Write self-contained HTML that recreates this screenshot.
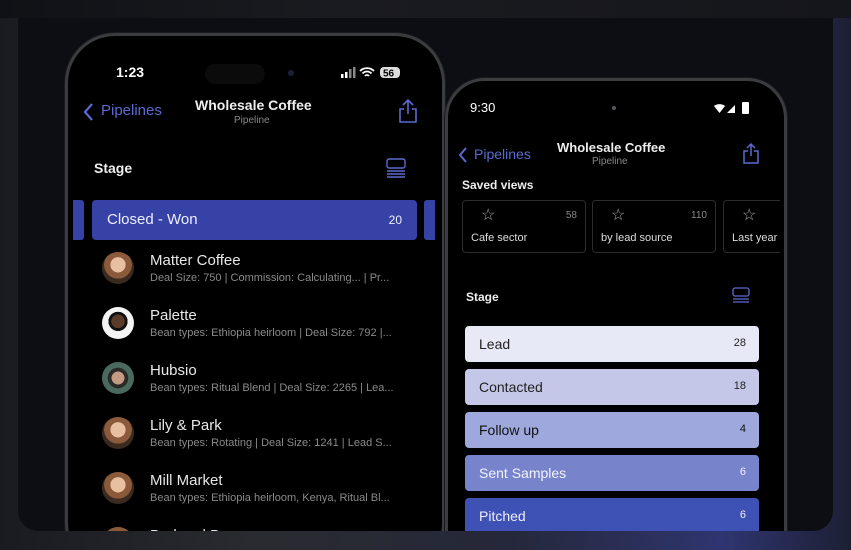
<!DOCTYPE html>
<html><head><style>
*{box-sizing:border-box;margin:0;padding:0}
body{width:851px;height:550px;overflow:hidden;background:linear-gradient(90deg,#1a1b20 0%,#2a2b30 30%,#25283a 60%,#2f3570 85%,#1c1f33 100%);font-family:"Liberation Sans",sans-serif;position:relative}
.top{position:absolute;left:0;top:0;width:851px;height:18px;background:linear-gradient(90deg,#101116,#1a1b20 40%,#15161b)}
.panel{position:absolute;left:18px;top:18px;width:815px;height:513px;border-radius:0 0 20px 20px;background:#0c0e13;overflow:hidden}
.ph{position:absolute;background:#000;border:3px solid #3b3c40;box-shadow:0 0 0 1px #1a1a1c;overflow:hidden}
.t{position:absolute;white-space:nowrap}
.blue{color:#5b6ad0}
.row{position:absolute;left:0;width:370px}
.av{position:absolute;left:34px;width:32px;height:32px;border-radius:50%;background:radial-gradient(circle at 50% 40%,#e8c0a0 0 30%,#8a5a3a 31% 55%,#3a2a20 56%)}
.nm{position:absolute;left:82px;font-size:15px;color:#e8e8e8}
.sub{position:absolute;left:82px;top:20px;font-size:11px;color:#8a8a8a}
.st{position:absolute;left:17px;width:294px;height:36px;border-radius:4px;font-size:14px}
.st span{position:absolute;left:14px;top:10px}
.st b{position:absolute;right:13px;top:11px;font-weight:normal;font-size:11px}
.card{position:absolute;top:0;width:124px;height:53px;border:1px solid #2c2c2e;border-radius:4px}
</style></head><body>
<div class="top"></div>
<div class="panel">
 <!-- phone 1 -->
 <div class="ph" style="left:47px;top:15px;width:380px;height:540px;border-radius:50px">
  <div class="t" style="left:48px;top:28px;color:#fff;font-size:14px;font-weight:bold">1:23</div>
  <div style="position:absolute;left:137px;top:28px;width:60px;height:20px;border-radius:10px;background:#0b0b0c"></div>
  <div style="position:absolute;left:220px;top:34px;width:6px;height:6px;border-radius:50%;background:#1b1f3a"></div>
  <svg style="position:absolute;left:272px;top:30px" width="70" height="14"><rect x="1" y="8" width="2.5" height="4" fill="#fff"/><rect x="5" y="6" width="2.5" height="6" fill="#fff"/><rect x="9" y="3" width="2.5" height="9" fill="#888"/><rect x="13" y="1" width="2.5" height="11" fill="#888"/><path d="M20 5a10 10 0 0 1 14 0M22.5 7.5a6 6 0 0 1 9 0M25 10a2.5 2.5 0 0 1 4 0" stroke="#fff" stroke-width="1.8" fill="none"/><rect x="40" y="1" width="20" height="11" rx="4" fill="#ddd"/><text x="43" y="10.5" font-size="10" font-weight="bold" font-family="Liberation Sans" fill="#000">56</text></svg>
  <svg style="position:absolute;left:14px;top:66px" width="14" height="20"><path d="M10 2L3 10l7 8" stroke="#5b6ad0" stroke-width="2.2" fill="none"/></svg>
  <div class="t blue" style="left:33px;top:66px;font-size:15px">Pipelines</div>
  <div class="t" style="left:127px;top:61px;color:#eee;font-size:14px;font-weight:bold">Wholesale Coffee</div>
  <div class="t" style="left:166px;top:79px;color:#888;font-size:10px">Pipeline</div>
  <svg style="position:absolute;left:330px;top:62px" width="20" height="26"><path d="M10 2v14M5 7l5-5 5 5M6 11H2v13h16V11h-4" stroke="#5b6ad0" stroke-width="1.6" fill="none"/></svg>
  <div class="t" style="left:26px;top:124px;color:#eee;font-size:14px;font-weight:bold">Stage</div>
  <svg style="position:absolute;left:318px;top:122px" width="22" height="20"><rect x="1" y="1" width="18" height="9" rx="2" stroke="#5b6ad0" stroke-width="1.4" fill="none"/><path d="M1 13h18M1 16h18M1 19h18" stroke="#5b6ad0" stroke-width="1.4"/></svg>
  <div style="position:absolute;left:5px;top:164px;width:11px;height:40px;background:#3642a6;border-radius:0 3px 3px 0"></div>
  <div style="position:absolute;left:24px;top:164px;width:325px;height:40px;background:#3642a6;border-radius:4px">
   <div class="t" style="left:15px;top:11px;color:#eef;font-size:15px">Closed - Won</div>
   <div class="t" style="right:15px;top:13px;color:#eef;font-size:12px">20</div></div>
  <div style="position:absolute;left:356px;top:164px;width:11px;height:40px;background:#3642a6;border-radius:3px 0 0 3px"></div>
  <div class="row" style="top:216px"><div class="av"></div><div class="nm">Matter Coffee</div><div class="sub">Deal Size: 750 | Commission: Calculating... | Pr...</div></div>
  <div class="row" style="top:271px"><div class="av" style="background:radial-gradient(circle at 50% 45%,#5a3a28 0 28%,#111 29% 40%,#f4f4f4 41%)"></div><div class="nm">Palette</div><div class="sub">Bean types: Ethiopia heirloom | Deal Size: 792 |...</div></div>
  <div class="row" style="top:326px"><div class="av" style="background:radial-gradient(circle at 50% 50%,#c49a80 0 28%,#2a2a28 29% 45%,#4a6a60 46%)"></div><div class="nm">Hubsio</div><div class="sub">Bean types: Ritual Blend | Deal Size: 2265 | Lea...</div></div>
  <div class="row" style="top:381px"><div class="av"></div><div class="nm">Lily &amp; Park</div><div class="sub">Bean types: Rotating | Deal Size: 1241 | Lead S...</div></div>
  <div class="row" style="top:436px"><div class="av"></div><div class="nm">Mill Market</div><div class="sub">Bean types: Ethiopia heirloom, Kenya, Ritual Bl...</div></div>
  <div class="row" style="top:491px"><div class="av"></div><div class="nm">Bud and Bean</div></div>
 </div>
 <!-- phone 2 -->
 <div class="ph" style="left:427px;top:60px;width:342px;height:500px;border-radius:40px">
  <div class="t" style="left:22px;top:19px;color:#fff;font-size:13px">9:30</div>
  <div style="position:absolute;left:164px;top:25px;width:4px;height:4px;border-radius:50%;background:#556"></div>
  <svg style="position:absolute;left:265px;top:20px" width="42" height="14"><path d="M1 5a9 9 0 0 1 11 0L6.5 12z" fill="#fff"/><path d="M14 12L22 4v8z" fill="#fff"/><rect x="29" y="1" width="7" height="12" rx="1" fill="#fff"/></svg>
  <svg style="position:absolute;left:8px;top:64px" width="14" height="20"><path d="M10 3L4 10l6 7" stroke="#5b6ad0" stroke-width="2" fill="none"/></svg>
  <div class="t blue" style="left:26px;top:65px;font-size:14px">Pipelines</div>
  <div class="t" style="left:109px;top:59px;color:#eee;font-size:13px;font-weight:bold">Wholesale Coffee</div>
  <div class="t" style="left:144px;top:75px;color:#888;font-size:10px">Pipeline</div>
  <svg style="position:absolute;left:294px;top:61px" width="20" height="24"><path d="M9 2v12M5 6l4-4 4 4M6 9H2v12h14V9h-4" stroke="#5b6ad0" stroke-width="1.5" fill="none"/></svg>
  <div class="t" style="left:14px;top:97px;color:#eee;font-size:12px;font-weight:bold">Saved views</div>
  <div style="position:absolute;left:14px;top:119px;width:318px;height:54px;overflow:hidden">
   <div class="card" style="left:0"><div class="t" style="left:18px;top:4px;color:#aaa;font-size:16px">☆</div><div class="t" style="right:8px;top:9px;color:#888;font-size:10px">58</div><div class="t" style="left:8px;top:31px;color:#ddd;font-size:11px">Cafe sector</div></div>
   <div class="card" style="left:130px"><div class="t" style="left:18px;top:4px;color:#aaa;font-size:16px">☆</div><div class="t" style="right:8px;top:9px;color:#888;font-size:10px">110</div><div class="t" style="left:8px;top:31px;color:#ddd;font-size:11px">by lead source</div></div>
   <div class="card" style="left:261px"><div class="t" style="left:18px;top:4px;color:#aaa;font-size:16px">☆</div><div class="t" style="left:8px;top:31px;color:#ddd;font-size:11px">Last year</div></div>
  </div>
  <div class="t" style="left:18px;top:209px;color:#eee;font-size:12px;font-weight:bold">Stage</div>
  <svg style="position:absolute;left:284px;top:206px" width="20" height="18"><rect x="1" y="1" width="16" height="8" rx="2" stroke="#5b6ad0" stroke-width="1.3" fill="none"/><path d="M1 12h16M1 15h16" stroke="#5b6ad0" stroke-width="1.3"/></svg>
  <div class="st" style="top:245px;background:#e8e9f6;color:#222"><span>Lead</span><b>28</b></div>
  <div class="st" style="top:288px;background:#c4c7e8;color:#222"><span>Contacted</span><b>18</b></div>
  <div class="st" style="top:331px;background:#9ea8dc;color:#111"><span>Follow up</span><b>4</b></div>
  <div class="st" style="top:374px;background:#7784cb;color:#f2f2ff"><span>Sent Samples</span><b>6</b></div>
  <div class="st" style="top:417px;background:#3e51b5;color:#eef"><span>Pitched</span><b>6</b></div>
 </div>
</div>
</body></html>
